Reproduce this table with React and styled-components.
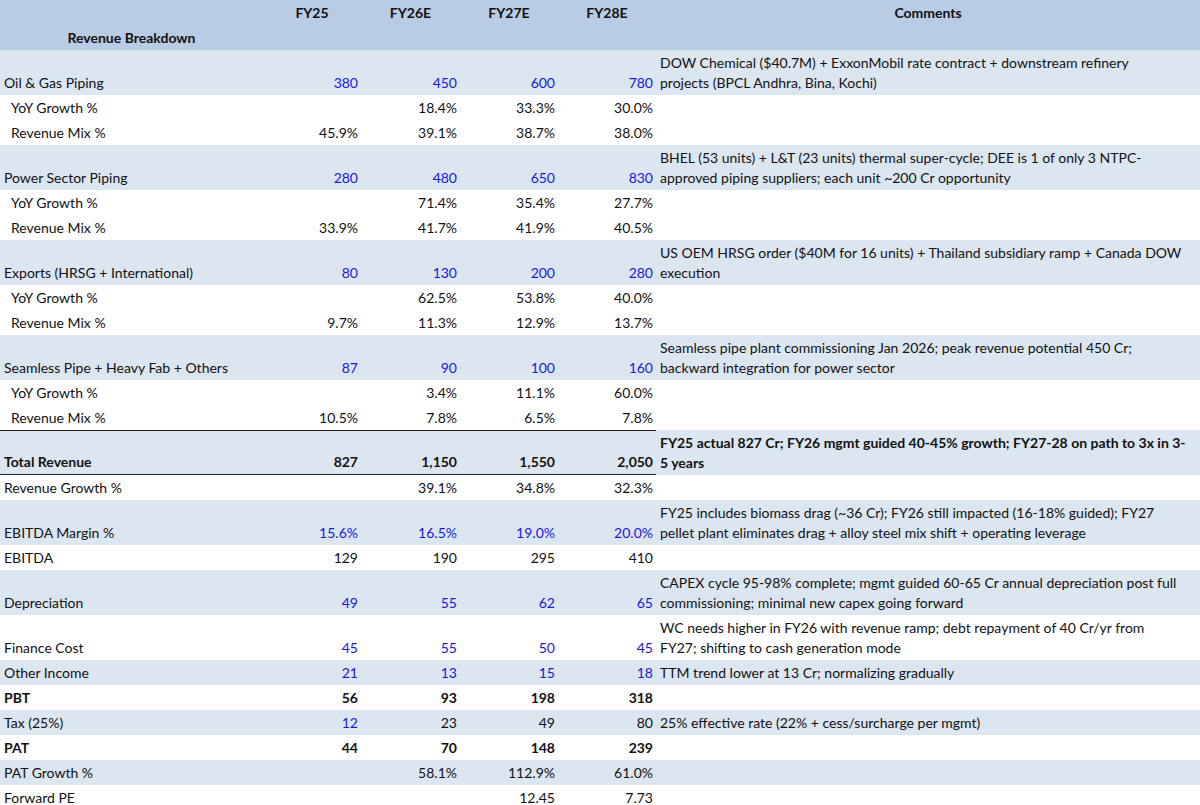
import React from 'react';
import styled, { createGlobalStyle } from 'styled-components';

const GlobalStyle = createGlobalStyle`
  html, body {
    margin: 0;
    padding: 0;
    background: #ffffff;
    overflow: hidden;
  }
  body {
    font-family: 'Lato', 'Liberation Sans', sans-serif;
    color: #111111;
  }
`;

const COLS = '263px 98px 99px 98px 98px 544px';

const Sheet = styled.div`
  width: 1200px;
  font-size: 14px;
`;

const HeaderBlock = styled.div`
  display: grid;
  grid-template-columns: ${COLS};
  grid-template-rows: 25px 25px;
  background: #b8cce4;
  font-weight: 700;
`;

const HeadCell = styled.div`
  display: flex;
  align-items: center;
  justify-content: center;
  grid-column: ${(p) => p.$col};
  grid-row: ${(p) => p.$row};
`;

const Row = styled.div`
  display: grid;
  grid-template-columns: ${COLS};
  min-height: 25px;
  background: ${(p) => (p.$tone === 'blue' ? '#dce6f1' : '#ffffff')};
  font-weight: ${(p) => (p.$bold ? 700 : 400)};
  line-height: 20px;
`;

const LabelCell = styled.div`
  display: flex;
  align-items: flex-end;
  padding: 0 4px 2px ${(p) => (p.$indent ? '11px' : '4px')};
  white-space: nowrap;
  border-top: ${(p) => (p.$rule ? '1.5px solid #222' : 'none')};
  border-bottom: ${(p) => (p.$rule ? '1.5px solid #222' : 'none')};
`;

const ValueCell = styled.div`
  display: flex;
  align-items: flex-end;
  justify-content: flex-end;
  padding: 0 3px 2px 0;
  color: ${(p) => (p.$blue ? '#1818dc' : 'inherit')};
  white-space: nowrap;
  border-top: ${(p) => (p.$rule ? '1.5px solid #222' : 'none')};
  border-bottom: ${(p) => (p.$rule ? '1.5px solid #222' : 'none')};
`;

const CommentCell = styled.div`
  display: flex;
  flex-direction: column;
  justify-content: flex-end;
  padding: ${(p) => (p.$lines > 1 ? '3px' : '0')} 6px 2px 4px;
  white-space: nowrap;
`;

const CommentLine = styled.span`
  display: block;
`;

const rows = [
  { label: 'Oil & Gas Piping', tone: 'blue', vals: ['380', '450', '600', '780'], blue: [1, 1, 1, 1], comment: ['DOW Chemical ($40.7M) + ExxonMobil rate contract + downstream refinery', 'projects (BPCL Andhra, Bina, Kochi)'] },
  { label: 'YoY Growth %', indent: true, vals: ['', '18.4%', '33.3%', '30.0%'] },
  { label: 'Revenue Mix %', indent: true, vals: ['45.9%', '39.1%', '38.7%', '38.0%'] },
  { label: 'Power Sector Piping', tone: 'blue', vals: ['280', '480', '650', '830'], blue: [1, 1, 1, 1], comment: ['BHEL (53 units) + L&T (23 units) thermal super-cycle; DEE is 1 of only 3 NTPC-', 'approved piping suppliers; each unit ~200 Cr opportunity'] },
  { label: 'YoY Growth %', indent: true, vals: ['', '71.4%', '35.4%', '27.7%'] },
  { label: 'Revenue Mix %', indent: true, vals: ['33.9%', '41.7%', '41.9%', '40.5%'] },
  { label: 'Exports (HRSG + International)', tone: 'blue', vals: ['80', '130', '200', '280'], blue: [1, 1, 1, 1], comment: ['US OEM HRSG order ($40M for 16 units) + Thailand subsidiary ramp + Canada DOW', 'execution'] },
  { label: 'YoY Growth %', indent: true, vals: ['', '62.5%', '53.8%', '40.0%'] },
  { label: 'Revenue Mix %', indent: true, vals: ['9.7%', '11.3%', '12.9%', '13.7%'] },
  { label: 'Seamless Pipe + Heavy Fab + Others', tone: 'blue', vals: ['87', '90', '100', '160'], blue: [1, 1, 1, 1], comment: ['Seamless pipe plant commissioning Jan 2026; peak revenue potential 450 Cr;', 'backward integration for power sector'] },
  { label: 'YoY Growth %', indent: true, vals: ['', '3.4%', '11.1%', '60.0%'] },
  { label: 'Revenue Mix %', indent: true, vals: ['10.5%', '7.8%', '6.5%', '7.8%'] },
  { label: 'Total Revenue', tone: 'blue', bold: true, rule: true, vals: ['827', '1,150', '1,550', '2,050'], comment: ['FY25 actual 827 Cr; FY26 mgmt guided 40-45% growth; FY27-28 on path to 3x in 3-', '5 years'] },
  { label: 'Revenue Growth %', vals: ['', '39.1%', '34.8%', '32.3%'] },
  { label: 'EBITDA Margin %', tone: 'blue', vals: ['15.6%', '16.5%', '19.0%', '20.0%'], blue: [1, 1, 1, 1], comment: ['FY25 includes biomass drag (~36 Cr); FY26 still impacted (16-18% guided); FY27', 'pellet plant eliminates drag + alloy steel mix shift + operating leverage'] },
  { label: 'EBITDA', vals: ['129', '190', '295', '410'] },
  { label: 'Depreciation', tone: 'blue', vals: ['49', '55', '62', '65'], blue: [1, 1, 1, 1], comment: ['CAPEX cycle 95-98% complete; mgmt guided 60-65 Cr annual depreciation post full', 'commissioning; minimal new capex going forward'] },
  { label: 'Finance Cost', vals: ['45', '55', '50', '45'], blue: [1, 1, 1, 1], comment: ['WC needs higher in FY26 with revenue ramp; debt repayment of 40 Cr/yr from', 'FY27; shifting to cash generation mode'] },
  { label: 'Other Income', tone: 'blue', vals: ['21', '13', '15', '18'], blue: [1, 1, 1, 1], comment: ['TTM trend lower at 13 Cr; normalizing gradually'] },
  { label: 'PBT', bold: true, vals: ['56', '93', '198', '318'] },
  { label: 'Tax (25%)', tone: 'blue', vals: ['12', '23', '49', '80'], blue: [1, 0, 0, 0], comment: ['25% effective rate (22% + cess/surcharge per mgmt)'] },
  { label: 'PAT', bold: true, vals: ['44', '70', '148', '239'] },
  { label: 'PAT Growth %', tone: 'blue', vals: ['', '58.1%', '112.9%', '61.0%'] },
  { label: 'Forward PE', vals: ['', '', '12.45', '7.73'] },
];

const years = ['FY25', 'FY26E', 'FY27E', 'FY28E'];

export default function App() {
  return (
    <Sheet>
      <GlobalStyle />
      <HeaderBlock>
        {years.map((y, i) => (
          <HeadCell key={y} $col={i + 2} $row={1}>{y}</HeadCell>
        ))}
        <HeadCell $col={6} $row={1}>Comments</HeadCell>
        <HeadCell $col={1} $row={2}>Revenue Breakdown</HeadCell>
      </HeaderBlock>
      {rows.map((r, idx) => {
        const lines = r.comment || [];
        return (
          <Row key={idx} $tone={r.tone} $bold={r.bold}>
            <LabelCell $indent={r.indent} $rule={r.rule}>{r.label}</LabelCell>
            {r.vals.map((v, i) => (
              <ValueCell key={i} $blue={r.blue && r.blue[i]} $rule={r.rule}>{v}</ValueCell>
            ))}
            <CommentCell $lines={lines.length}>
              {lines.map((line, i) => (
                <CommentLine key={i}>{line}</CommentLine>
              ))}
            </CommentCell>
          </Row>
        );
      })}
    </Sheet>
  );
}
